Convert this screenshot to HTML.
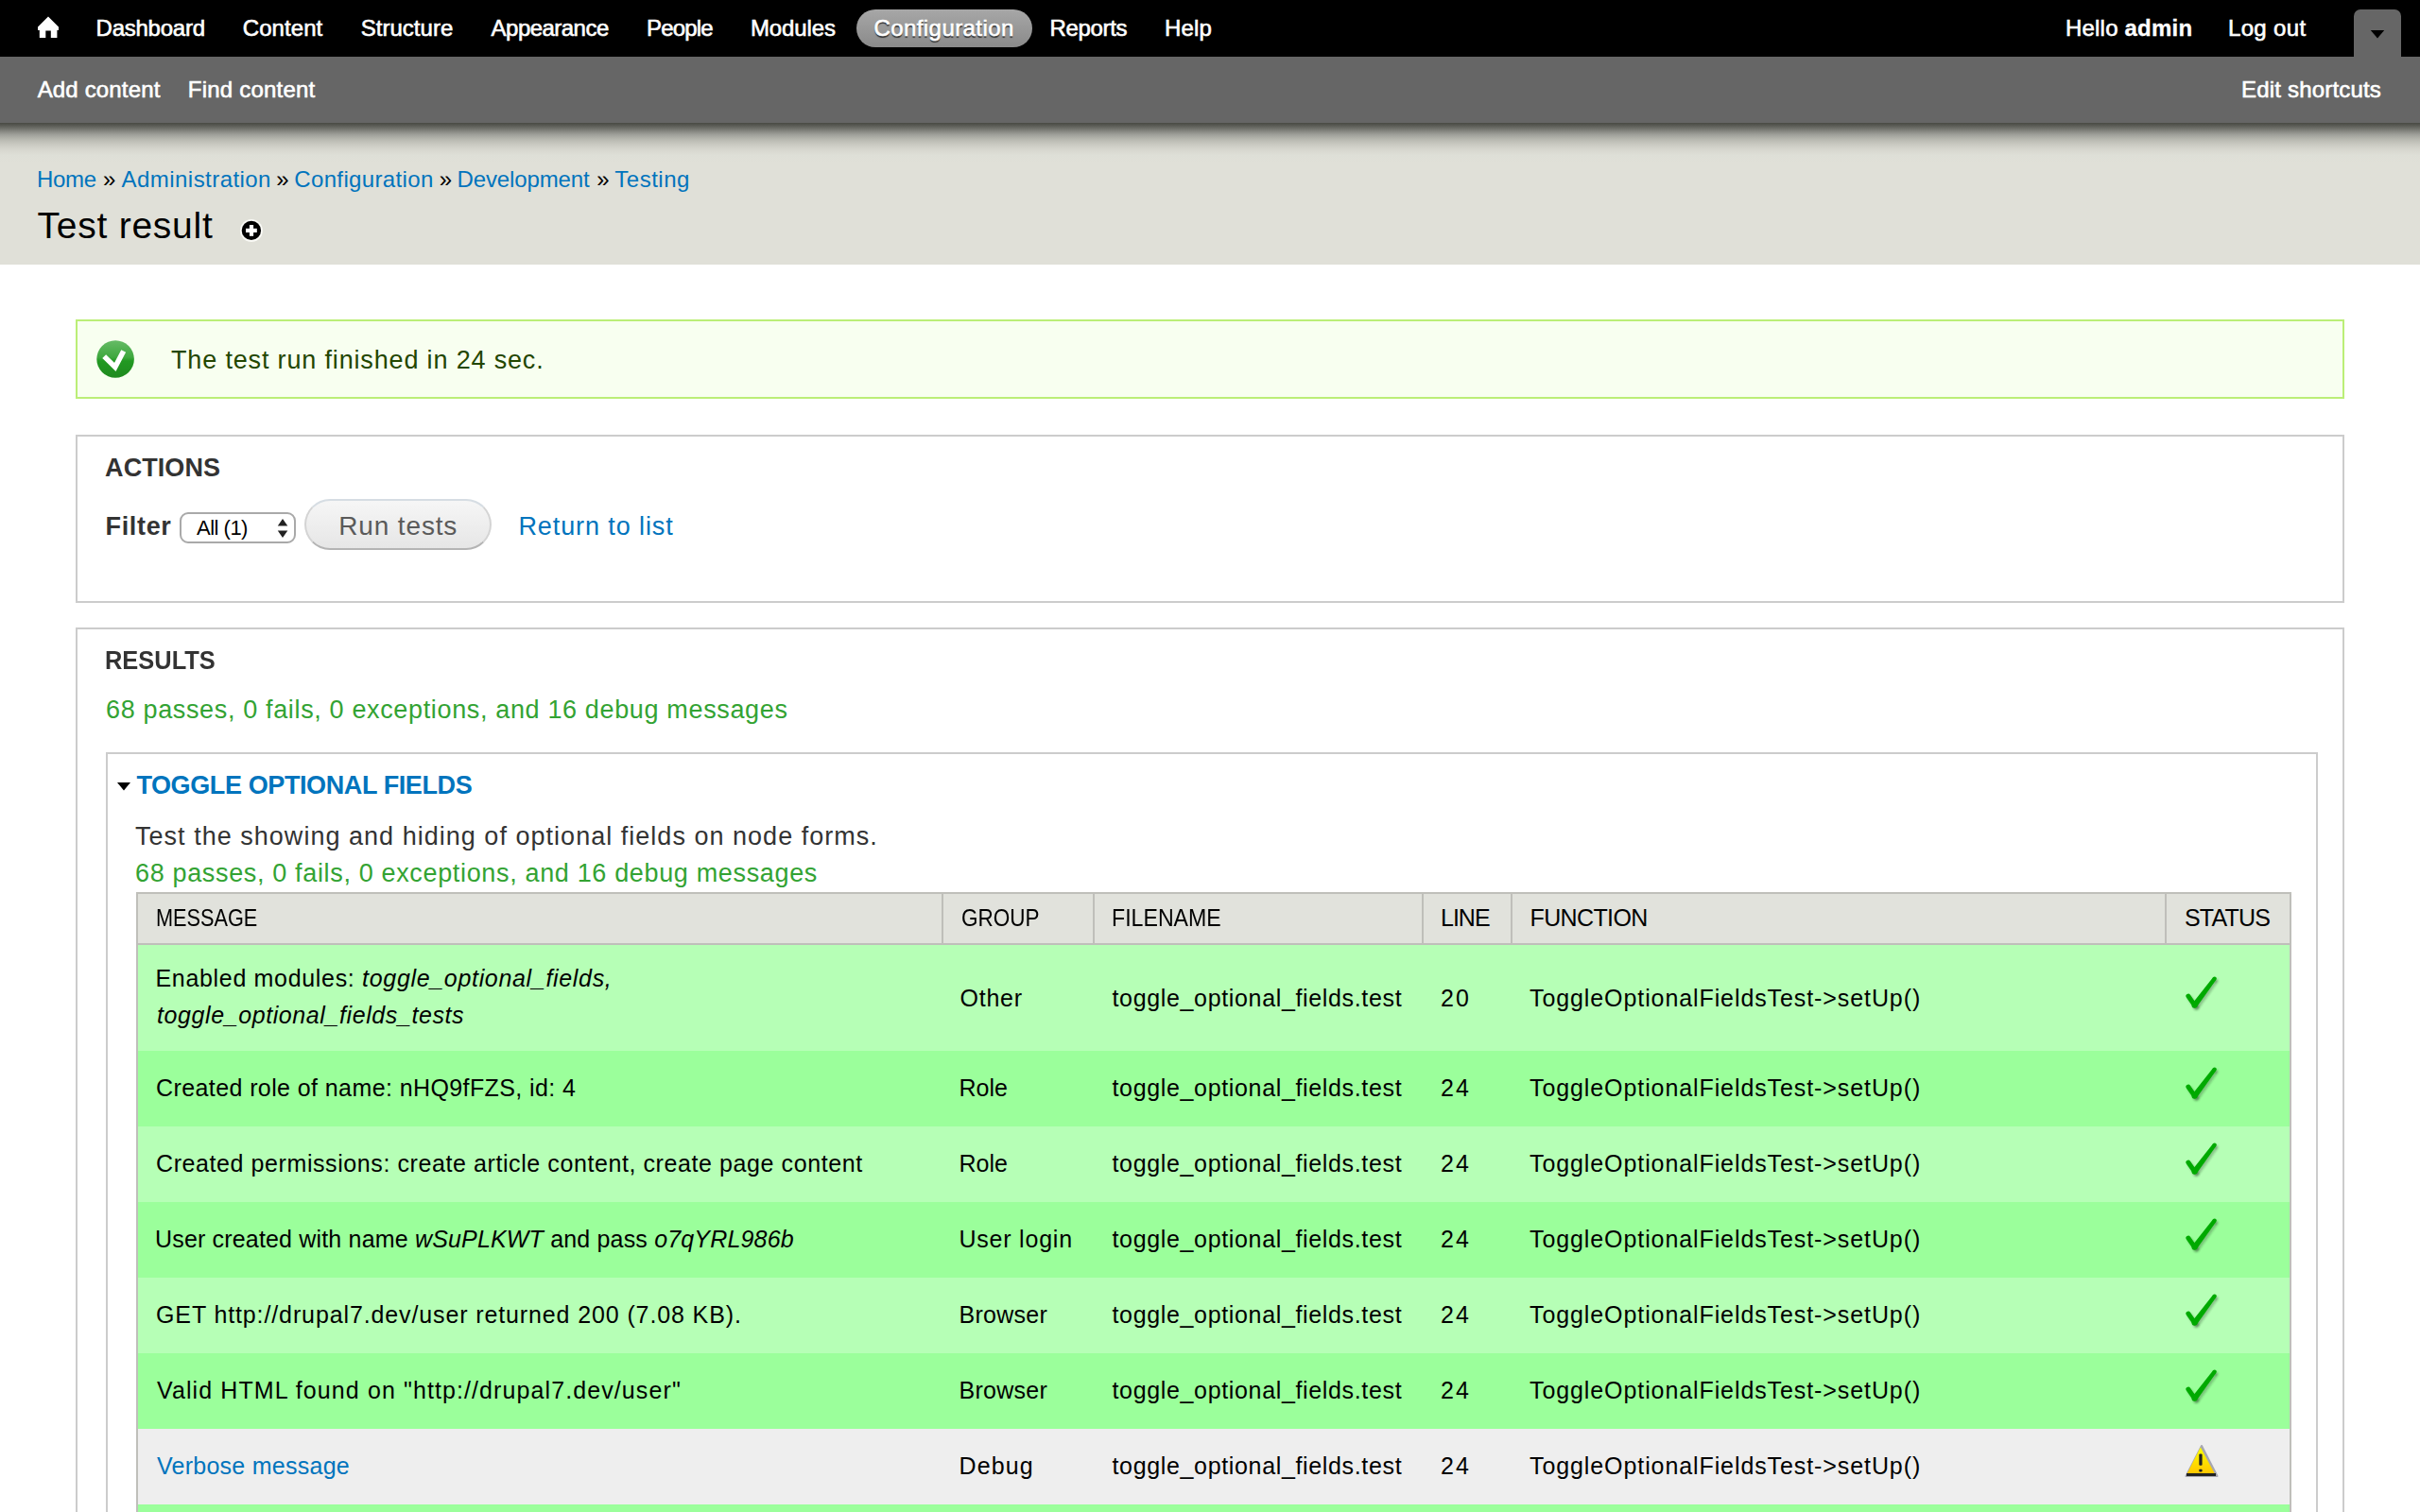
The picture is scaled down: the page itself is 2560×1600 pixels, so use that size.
<!DOCTYPE html>
<html><head><meta charset="utf-8"><title>Test result</title>
<style>
html,body{margin:0;padding:0;background:#fff;width:2560px;height:1600px;overflow:hidden;position:relative}
body{font-family:'Liberation Sans',sans-serif}
.t{position:absolute;white-space:pre;line-height:normal;font-family:'Liberation Sans',sans-serif}
i{font-style:italic}
</style></head><body>
<div style="position:absolute;left:0px;top:0px;width:2560px;height:60px;background:#000"></div>
<div style="position:absolute;left:0px;top:60px;width:2560px;height:70px;background:#666"></div>
<div style="position:absolute;left:0px;top:130px;width:2560px;height:150px;background:linear-gradient(#494a44 0px,#5a5b55 3px,#7b7c76 7.5px,#9c9d97 12px,#b5b6ae 17px,#c7c7bf 22px,#d6d6ce 28px,#dedfd7 34px,#e0e0d8 42px)"></div>
<div style="position:absolute;left:906px;top:10px;width:186px;height:40px;border-radius:20px;background:linear-gradient(#a7a7a7,#8a8a8a)"></div>
<div style="position:absolute;left:2490px;top:10px;width:50px;height:50px;background:#666;border-radius:7px 7px 0 0"></div>
<svg style="position:absolute;left:0;top:0" width="2560" height="1600"><path d="M2507.8 32 L2522.2 32 L2515 40.5 Z" fill="#000"/><path d="M51 17.5 L62 28.5 L62 32 L60.4 32 L60.4 40 L53.8 40 L53.8 32.5 L48.3 32.5 L48.3 40 L41.8 40 L41.8 32 L40 32 L40 28.5 Z" fill="#fff"/><circle cx="265.9" cy="243.9" r="12" fill="#fafaf6"/><circle cx="265.9" cy="243.9" r="10.2" fill="#000"/><rect x="263.9" y="238" width="4.2" height="11.8" fill="#fff"/><rect x="260" y="241.8" width="11.8" height="4.2" fill="#fff"/><path d="M124 828 L138 828 L131 836.5 Z" fill="#000"/></svg>
<div style="position:absolute;left:80px;top:338px;width:2396px;height:80px;border:2px solid #bbee77;background:#f8fff0"></div>
<svg style="position:absolute;left:100px;top:358px" width="44" height="44"><defs><linearGradient id="cg" x1="0" y1="0" x2="0" y2="1"><stop offset="0" stop-color="#66bb66"/><stop offset="0.45" stop-color="#3fa83f"/><stop offset="0.55" stop-color="#229922"/><stop offset="1" stop-color="#1f8a1f"/></linearGradient></defs><circle cx="22.1" cy="22" r="19.8" fill="url(#cg)"/><path d="M10.2 19.1 L21.8 30.4 L30.7 13.5" fill="none" stroke="#fff" stroke-width="5.5" stroke-linejoin="miter"/></svg>
<div style="position:absolute;left:80px;top:460px;width:2396px;height:174px;border:2px solid #cccccc"></div>
<div style="position:absolute;left:190px;top:542px;width:119px;height:29px;border:2px solid #a9a9a9;border-radius:9px;background:#fff"></div>
<svg style="position:absolute;left:290px;top:545px" width="20" height="28"><path d="M3.8 11.6 L14.3 11.6 L9 4 Z M3.8 16.6 L14.3 16.6 L9 24 Z" fill="#222"/></svg>
<div style="position:absolute;left:322px;top:528px;width:194px;height:50px;border:2px solid #d4d4d4;border-top-color:#d6dde3;border-bottom-color:#b4b4b4;border-radius:27px;background:linear-gradient(#f6f6f6,#e6e6e6)"></div>
<div style="position:absolute;left:80px;top:664px;width:2396px;height:1000px;border:2px solid #cccccc;border-bottom:none"></div>
<div style="position:absolute;left:112px;top:796px;width:2336px;height:900px;border:2px solid #cccccc;border-bottom:none"></div>
<div style="position:absolute;left:144px;top:944px;width:2276px;height:52px;background:#e1e2dc;border:2px solid #bfbfba"></div>
<div style="position:absolute;left:995.5px;top:946px;width:2px;height:52px;background:#bfbfba"></div>
<div style="position:absolute;left:1155.8px;top:946px;width:2px;height:52px;background:#bfbfba"></div>
<div style="position:absolute;left:1503.5px;top:946px;width:2px;height:52px;background:#bfbfba"></div>
<div style="position:absolute;left:1597.6px;top:946px;width:2px;height:52px;background:#bfbfba"></div>
<div style="position:absolute;left:2289.8px;top:946px;width:2px;height:52px;background:#bfbfba"></div>
<div style="position:absolute;left:146px;top:998px;width:2276px;height:114px;background:#b6ffb6"></div>
<div style="position:absolute;left:146px;top:1112px;width:2276px;height:80px;background:#9bff9b"></div>
<div style="position:absolute;left:146px;top:1192px;width:2276px;height:80px;background:#b6ffb6"></div>
<div style="position:absolute;left:146px;top:1272px;width:2276px;height:80px;background:#9bff9b"></div>
<div style="position:absolute;left:146px;top:1352px;width:2276px;height:80px;background:#b6ffb6"></div>
<div style="position:absolute;left:146px;top:1432px;width:2276px;height:80px;background:#9bff9b"></div>
<div style="position:absolute;left:146px;top:1512px;width:2276px;height:80px;background:#eeeeee"></div>
<div style="position:absolute;left:146px;top:1592px;width:2276px;height:108px;background:#9bff9b"></div>
<div style="position:absolute;left:144px;top:998px;width:2px;height:700px;background:#bfbfba"></div>
<div style="position:absolute;left:2422px;top:998px;width:2px;height:700px;background:#bfbfba"></div>
<div style="position:absolute;left:144px;top:998px;width:2280px;height:2px;background:#bfbfba"></div>
<svg style="position:absolute;left:2310px;top:1030px" width="42" height="44"><defs><filter id="bl" x="-20%" y="-20%" width="140%" height="140%"><feGaussianBlur stdDeviation="0.9"/></filter></defs><g transform="translate(1.8,2.2)" fill="rgba(40,70,40,0.32)" stroke="rgba(40,70,40,0.32)" filter="url(#bl)"><path d="M4.9 24.1 L11.5 33.7" stroke-width="5.0" stroke-linecap="round"/><path d="M9.11 31.89 L31.02 4.34 L34.38 6.86 L13.89 35.51 Z" stroke="none"/><circle cx="32.7" cy="5.6" r="2.1" stroke="none"/><circle cx="11.5" cy="33.7" r="3.0" stroke="none"/></g><g fill="#00aa00" stroke="#00aa00"><path d="M4.9 24.1 L11.5 33.7" stroke-width="5.0" stroke-linecap="round"/><path d="M9.11 31.89 L31.02 4.34 L34.38 6.86 L13.89 35.51 Z" stroke="none"/><circle cx="32.7" cy="5.6" r="2.1" stroke="none"/><circle cx="11.5" cy="33.7" r="3.0" stroke="none"/></g></svg>
<svg style="position:absolute;left:2310px;top:1126px" width="42" height="44"><defs><filter id="bl" x="-20%" y="-20%" width="140%" height="140%"><feGaussianBlur stdDeviation="0.9"/></filter></defs><g transform="translate(1.8,2.2)" fill="rgba(40,70,40,0.32)" stroke="rgba(40,70,40,0.32)" filter="url(#bl)"><path d="M4.9 24.1 L11.5 33.7" stroke-width="5.0" stroke-linecap="round"/><path d="M9.11 31.89 L31.02 4.34 L34.38 6.86 L13.89 35.51 Z" stroke="none"/><circle cx="32.7" cy="5.6" r="2.1" stroke="none"/><circle cx="11.5" cy="33.7" r="3.0" stroke="none"/></g><g fill="#00aa00" stroke="#00aa00"><path d="M4.9 24.1 L11.5 33.7" stroke-width="5.0" stroke-linecap="round"/><path d="M9.11 31.89 L31.02 4.34 L34.38 6.86 L13.89 35.51 Z" stroke="none"/><circle cx="32.7" cy="5.6" r="2.1" stroke="none"/><circle cx="11.5" cy="33.7" r="3.0" stroke="none"/></g></svg>
<svg style="position:absolute;left:2310px;top:1206px" width="42" height="44"><defs><filter id="bl" x="-20%" y="-20%" width="140%" height="140%"><feGaussianBlur stdDeviation="0.9"/></filter></defs><g transform="translate(1.8,2.2)" fill="rgba(40,70,40,0.32)" stroke="rgba(40,70,40,0.32)" filter="url(#bl)"><path d="M4.9 24.1 L11.5 33.7" stroke-width="5.0" stroke-linecap="round"/><path d="M9.11 31.89 L31.02 4.34 L34.38 6.86 L13.89 35.51 Z" stroke="none"/><circle cx="32.7" cy="5.6" r="2.1" stroke="none"/><circle cx="11.5" cy="33.7" r="3.0" stroke="none"/></g><g fill="#00aa00" stroke="#00aa00"><path d="M4.9 24.1 L11.5 33.7" stroke-width="5.0" stroke-linecap="round"/><path d="M9.11 31.89 L31.02 4.34 L34.38 6.86 L13.89 35.51 Z" stroke="none"/><circle cx="32.7" cy="5.6" r="2.1" stroke="none"/><circle cx="11.5" cy="33.7" r="3.0" stroke="none"/></g></svg>
<svg style="position:absolute;left:2310px;top:1286px" width="42" height="44"><defs><filter id="bl" x="-20%" y="-20%" width="140%" height="140%"><feGaussianBlur stdDeviation="0.9"/></filter></defs><g transform="translate(1.8,2.2)" fill="rgba(40,70,40,0.32)" stroke="rgba(40,70,40,0.32)" filter="url(#bl)"><path d="M4.9 24.1 L11.5 33.7" stroke-width="5.0" stroke-linecap="round"/><path d="M9.11 31.89 L31.02 4.34 L34.38 6.86 L13.89 35.51 Z" stroke="none"/><circle cx="32.7" cy="5.6" r="2.1" stroke="none"/><circle cx="11.5" cy="33.7" r="3.0" stroke="none"/></g><g fill="#00aa00" stroke="#00aa00"><path d="M4.9 24.1 L11.5 33.7" stroke-width="5.0" stroke-linecap="round"/><path d="M9.11 31.89 L31.02 4.34 L34.38 6.86 L13.89 35.51 Z" stroke="none"/><circle cx="32.7" cy="5.6" r="2.1" stroke="none"/><circle cx="11.5" cy="33.7" r="3.0" stroke="none"/></g></svg>
<svg style="position:absolute;left:2310px;top:1366px" width="42" height="44"><defs><filter id="bl" x="-20%" y="-20%" width="140%" height="140%"><feGaussianBlur stdDeviation="0.9"/></filter></defs><g transform="translate(1.8,2.2)" fill="rgba(40,70,40,0.32)" stroke="rgba(40,70,40,0.32)" filter="url(#bl)"><path d="M4.9 24.1 L11.5 33.7" stroke-width="5.0" stroke-linecap="round"/><path d="M9.11 31.89 L31.02 4.34 L34.38 6.86 L13.89 35.51 Z" stroke="none"/><circle cx="32.7" cy="5.6" r="2.1" stroke="none"/><circle cx="11.5" cy="33.7" r="3.0" stroke="none"/></g><g fill="#00aa00" stroke="#00aa00"><path d="M4.9 24.1 L11.5 33.7" stroke-width="5.0" stroke-linecap="round"/><path d="M9.11 31.89 L31.02 4.34 L34.38 6.86 L13.89 35.51 Z" stroke="none"/><circle cx="32.7" cy="5.6" r="2.1" stroke="none"/><circle cx="11.5" cy="33.7" r="3.0" stroke="none"/></g></svg>
<svg style="position:absolute;left:2310px;top:1446px" width="42" height="44"><defs><filter id="bl" x="-20%" y="-20%" width="140%" height="140%"><feGaussianBlur stdDeviation="0.9"/></filter></defs><g transform="translate(1.8,2.2)" fill="rgba(40,70,40,0.32)" stroke="rgba(40,70,40,0.32)" filter="url(#bl)"><path d="M4.9 24.1 L11.5 33.7" stroke-width="5.0" stroke-linecap="round"/><path d="M9.11 31.89 L31.02 4.34 L34.38 6.86 L13.89 35.51 Z" stroke="none"/><circle cx="32.7" cy="5.6" r="2.1" stroke="none"/><circle cx="11.5" cy="33.7" r="3.0" stroke="none"/></g><g fill="#00aa00" stroke="#00aa00"><path d="M4.9 24.1 L11.5 33.7" stroke-width="5.0" stroke-linecap="round"/><path d="M9.11 31.89 L31.02 4.34 L34.38 6.86 L13.89 35.51 Z" stroke="none"/><circle cx="32.7" cy="5.6" r="2.1" stroke="none"/><circle cx="11.5" cy="33.7" r="3.0" stroke="none"/></g></svg>
<svg style="position:absolute;left:2306px;top:1524px" width="46" height="46"><defs><linearGradient id="wg" x1="0" y1="0" x2="0" y2="1"><stop offset="0" stop-color="#ffff00"/><stop offset="1" stop-color="#ffc400"/></linearGradient></defs><path d="M23 6 L39.5 38 L6.5 38 Z" fill="#8a8a9a" stroke="#8a8a9a" stroke-width="2" stroke-linejoin="round" opacity="0.7"/><path d="M21.8 7.5 L37.5 36.5 L7 36.5 Z" fill="url(#wg)"/><rect x="7" y="35" width="31" height="3" fill="#222"/><rect x="20.3" y="14.5" width="3.3" height="12.2" rx="1" fill="#222"/><rect x="20.3" y="30.8" width="3.3" height="2.8" rx="0.8" fill="#222"/></svg>
<div class="t" style="left:101.6px;top:16.0px;font-size:24px;color:#fff;-webkit-text-stroke:0.6px #fff;letter-spacing:-0.251px">Dashboard</div>
<div class="t" style="left:256.8px;top:16.0px;font-size:24px;color:#fff;-webkit-text-stroke:0.6px #fff;letter-spacing:0.066px">Content</div>
<div class="t" style="left:381.7px;top:16.0px;font-size:24px;color:#fff;-webkit-text-stroke:0.6px #fff;letter-spacing:0.026px">Structure</div>
<div class="t" style="left:519.6px;top:16.0px;font-size:24px;color:#fff;-webkit-text-stroke:0.6px #fff;letter-spacing:-0.533px">Appearance</div>
<div class="t" style="left:684.0px;top:16.0px;font-size:24px;color:#fff;-webkit-text-stroke:0.6px #fff;letter-spacing:-0.84px">People</div>
<div class="t" style="left:794.0px;top:16.0px;font-size:24px;color:#fff;-webkit-text-stroke:0.6px #fff;letter-spacing:-0.134px">Modules</div>
<div class="t" style="left:924.5px;top:16.0px;font-size:24px;color:#fff;-webkit-text-stroke:0.6px #fff;text-shadow:0 1.5px 1px #333;letter-spacing:0.417px">Configuration</div>
<div class="t" style="left:1110.6px;top:16.0px;font-size:24px;color:#fff;-webkit-text-stroke:0.6px #fff;letter-spacing:-0.366px">Reports</div>
<div class="t" style="left:1232.0px;top:16.0px;font-size:24px;color:#fff;-webkit-text-stroke:0.6px #fff;letter-spacing:0.2px">Help</div>
<div class="t" style="left:2185.0px;top:16.0px;font-size:24px;color:#fff;-webkit-text-stroke:0.6px #fff;letter-spacing:0.2px">Hello <b style='-webkit-text-stroke:0.3px #fff'>admin</b></div>
<div class="t" style="left:2357.0px;top:16.0px;font-size:24px;color:#fff;-webkit-text-stroke:0.6px #fff;letter-spacing:0.333px">Log out</div>
<div class="t" style="left:39.7px;top:80.5px;font-size:24px;color:#fff;-webkit-text-stroke:0.6px #fff;letter-spacing:0.16px">Add content</div>
<div class="t" style="left:198.8px;top:80.5px;font-size:24px;color:#fff;-webkit-text-stroke:0.6px #fff;letter-spacing:0.218px">Find content</div>
<div class="t" style="left:2371.0px;top:80.5px;font-size:24px;color:#fff;-webkit-text-stroke:0.6px #fff;letter-spacing:0.185px">Edit shortcuts</div>
<div class="t" style="left:39.0px;top:176.0px;font-size:24px;color:#0074bd;letter-spacing:-0.333px">Home</div>
<div class="t" style="left:109.0px;top:176.0px;font-size:24px;color:#000;letter-spacing:0px">»</div>
<div class="t" style="left:128.6px;top:176.0px;font-size:24px;color:#0074bd;letter-spacing:0.446px">Administration</div>
<div class="t" style="left:292.3px;top:176.0px;font-size:24px;color:#000;letter-spacing:0px">»</div>
<div class="t" style="left:311.3px;top:176.0px;font-size:24px;color:#0074bd;letter-spacing:0.35px">Configuration</div>
<div class="t" style="left:464.8px;top:176.0px;font-size:24px;color:#000;letter-spacing:0px">»</div>
<div class="t" style="left:483.6px;top:176.0px;font-size:24px;color:#0074bd;letter-spacing:-0.14px">Development</div>
<div class="t" style="left:631.2px;top:176.0px;font-size:24px;color:#000;letter-spacing:0px">»</div>
<div class="t" style="left:650.3px;top:176.0px;font-size:24px;color:#0074bd;letter-spacing:0.5px">Testing</div>
<div class="t" style="left:39.5px;top:217.0px;font-size:39px;color:#000;letter-spacing:0.76px">Test result</div>
<div class="t" style="left:181.0px;top:366.0px;font-size:27px;color:#234600;letter-spacing:0.839px">The test run finished in 24 sec.</div>
<div class="t" style="left:111.1px;top:480.0px;font-size:27px;font-weight:bold;color:#333;letter-spacing:0.067px">ACTIONS</div>
<div class="t" style="left:111.6px;top:542.0px;font-size:27px;font-weight:bold;color:#333;letter-spacing:0.64px">Filter</div>
<div class="t" style="left:208.0px;top:546.0px;font-size:22px;color:#000;letter-spacing:-0.5px">All (1)</div>
<div class="t" style="left:358.3px;top:541.0px;font-size:28px;color:#5a5a5a;letter-spacing:0.85px">Run tests</div>
<div class="t" style="left:548.4px;top:542.0px;font-size:27px;color:#0074bd;letter-spacing:0.908px">Return to list</div>
<div class="t" style="left:111.0px;top:684.0px;font-size:27px;font-weight:bold;color:#333;letter-spacing:0px;transform-origin:0 0;transform:scaleX(0.9421)">RESULTS</div>
<div class="t" style="left:112.0px;top:736.0px;font-size:27px;color:#33a333;letter-spacing:0.648px">68 passes, 0 fails, 0 exceptions, and 16 debug messages</div>
<div class="t" style="left:144.4px;top:816.0px;font-size:27px;font-weight:bold;color:#0074bd;letter-spacing:-0.391px">TOGGLE OPTIONAL FIELDS</div>
<div class="t" style="left:143.0px;top:870.0px;font-size:27px;color:#333;letter-spacing:1.023px">Test the showing and hiding of optional fields on node forms.</div>
<div class="t" style="left:143.0px;top:909.0px;font-size:27px;color:#33a333;letter-spacing:0.655px">68 passes, 0 fails, 0 exceptions, and 16 debug messages</div>
<div class="t" style="left:165.0px;top:957.0px;font-size:25px;color:#000;letter-spacing:0px;transform-origin:0 0;transform:scaleX(0.8678)">MESSAGE</div>
<div class="t" style="left:1017.0px;top:957.0px;font-size:25px;color:#000;letter-spacing:0px;transform-origin:0 0;transform:scaleX(0.9)">GROUP</div>
<div class="t" style="left:1176.0px;top:957.0px;font-size:25px;color:#000;letter-spacing:0px;transform-origin:0 0;transform:scaleX(0.9262)">FILENAME</div>
<div class="t" style="left:1524.0px;top:957.0px;font-size:25px;color:#000;letter-spacing:-1.0px">LINE</div>
<div class="t" style="left:1618.5px;top:957.0px;font-size:25px;color:#000;letter-spacing:-0.629px">FUNCTION</div>
<div class="t" style="left:2311.0px;top:957.0px;font-size:25px;color:#000;letter-spacing:-0.8px">STATUS</div>
<div class="t" style="left:164.5px;top:1020.7px;font-size:25px;color:#000;letter-spacing:0.677px">Enabled modules: <i>toggle_optional_fields,</i></div>
<div class="t" style="left:166.0px;top:1060.4px;font-size:25px;color:#000;letter-spacing:0.592px"><i>toggle_optional_fields_tests</i></div>
<div class="t" style="left:165.0px;top:1137.0px;font-size:25px;color:#000;letter-spacing:0.405px">Created role of name: nHQ9fFZS, id: 4</div>
<div class="t" style="left:165.0px;top:1217.0px;font-size:25px;color:#000;letter-spacing:0.587px">Created permissions: create article content, create page content</div>
<div class="t" style="left:164.0px;top:1297.0px;font-size:25px;color:#000;letter-spacing:0.172px">User created with name <i>wSuPLKWT</i> and pass <i>o7qYRL986b</i></div>
<div class="t" style="left:165.0px;top:1377.0px;font-size:25px;color:#000;letter-spacing:0.88px">GET http://drupal7.dev/user returned 200 (7.08 KB).</div>
<div class="t" style="left:166.0px;top:1457.0px;font-size:25px;color:#000;letter-spacing:1.096px">Valid HTML found on "http://drupal7.dev/user"</div>
<div class="t" style="left:166.0px;top:1537.0px;font-size:25px;color:#0074bd;letter-spacing:0.257px">Verbose message</div>
<div class="t" style="left:1015.5px;top:1042.0px;font-size:25px;color:#000;letter-spacing:0.75px">Other</div>
<div class="t" style="left:1176.5px;top:1042.0px;font-size:25px;color:#000;letter-spacing:0.654px">toggle_optional_fields.test</div>
<div class="t" style="left:1524.0px;top:1042.0px;font-size:25px;color:#000;letter-spacing:2.2px">20</div>
<div class="t" style="left:1618.0px;top:1042.0px;font-size:25px;color:#000;letter-spacing:0.907px">ToggleOptionalFieldsTest-&gt;setUp()</div>
<div class="t" style="left:1014.5px;top:1137.0px;font-size:25px;color:#000;letter-spacing:-0.0px">Role</div>
<div class="t" style="left:1176.5px;top:1137.0px;font-size:25px;color:#000;letter-spacing:0.654px">toggle_optional_fields.test</div>
<div class="t" style="left:1524.0px;top:1137.0px;font-size:25px;color:#000;letter-spacing:2.2px">24</div>
<div class="t" style="left:1618.0px;top:1137.0px;font-size:25px;color:#000;letter-spacing:0.907px">ToggleOptionalFieldsTest-&gt;setUp()</div>
<div class="t" style="left:1014.5px;top:1217.0px;font-size:25px;color:#000;letter-spacing:-0.0px">Role</div>
<div class="t" style="left:1176.5px;top:1217.0px;font-size:25px;color:#000;letter-spacing:0.654px">toggle_optional_fields.test</div>
<div class="t" style="left:1524.0px;top:1217.0px;font-size:25px;color:#000;letter-spacing:2.2px">24</div>
<div class="t" style="left:1618.0px;top:1217.0px;font-size:25px;color:#000;letter-spacing:0.907px">ToggleOptionalFieldsTest-&gt;setUp()</div>
<div class="t" style="left:1014.5px;top:1297.0px;font-size:25px;color:#000;letter-spacing:0.777px">User login</div>
<div class="t" style="left:1176.5px;top:1297.0px;font-size:25px;color:#000;letter-spacing:0.654px">toggle_optional_fields.test</div>
<div class="t" style="left:1524.0px;top:1297.0px;font-size:25px;color:#000;letter-spacing:2.2px">24</div>
<div class="t" style="left:1618.0px;top:1297.0px;font-size:25px;color:#000;letter-spacing:0.907px">ToggleOptionalFieldsTest-&gt;setUp()</div>
<div class="t" style="left:1014.5px;top:1377.0px;font-size:25px;color:#000;letter-spacing:0.266px">Browser</div>
<div class="t" style="left:1176.5px;top:1377.0px;font-size:25px;color:#000;letter-spacing:0.654px">toggle_optional_fields.test</div>
<div class="t" style="left:1524.0px;top:1377.0px;font-size:25px;color:#000;letter-spacing:2.2px">24</div>
<div class="t" style="left:1618.0px;top:1377.0px;font-size:25px;color:#000;letter-spacing:0.907px">ToggleOptionalFieldsTest-&gt;setUp()</div>
<div class="t" style="left:1014.5px;top:1457.0px;font-size:25px;color:#000;letter-spacing:0.266px">Browser</div>
<div class="t" style="left:1176.5px;top:1457.0px;font-size:25px;color:#000;letter-spacing:0.654px">toggle_optional_fields.test</div>
<div class="t" style="left:1524.0px;top:1457.0px;font-size:25px;color:#000;letter-spacing:2.2px">24</div>
<div class="t" style="left:1618.0px;top:1457.0px;font-size:25px;color:#000;letter-spacing:0.907px">ToggleOptionalFieldsTest-&gt;setUp()</div>
<div class="t" style="left:1014.5px;top:1537.0px;font-size:25px;color:#000;letter-spacing:1.15px">Debug</div>
<div class="t" style="left:1176.5px;top:1537.0px;font-size:25px;color:#000;letter-spacing:0.654px">toggle_optional_fields.test</div>
<div class="t" style="left:1524.0px;top:1537.0px;font-size:25px;color:#000;letter-spacing:2.2px">24</div>
<div class="t" style="left:1618.0px;top:1537.0px;font-size:25px;color:#000;letter-spacing:0.907px">ToggleOptionalFieldsTest-&gt;setUp()</div>
</body></html>
